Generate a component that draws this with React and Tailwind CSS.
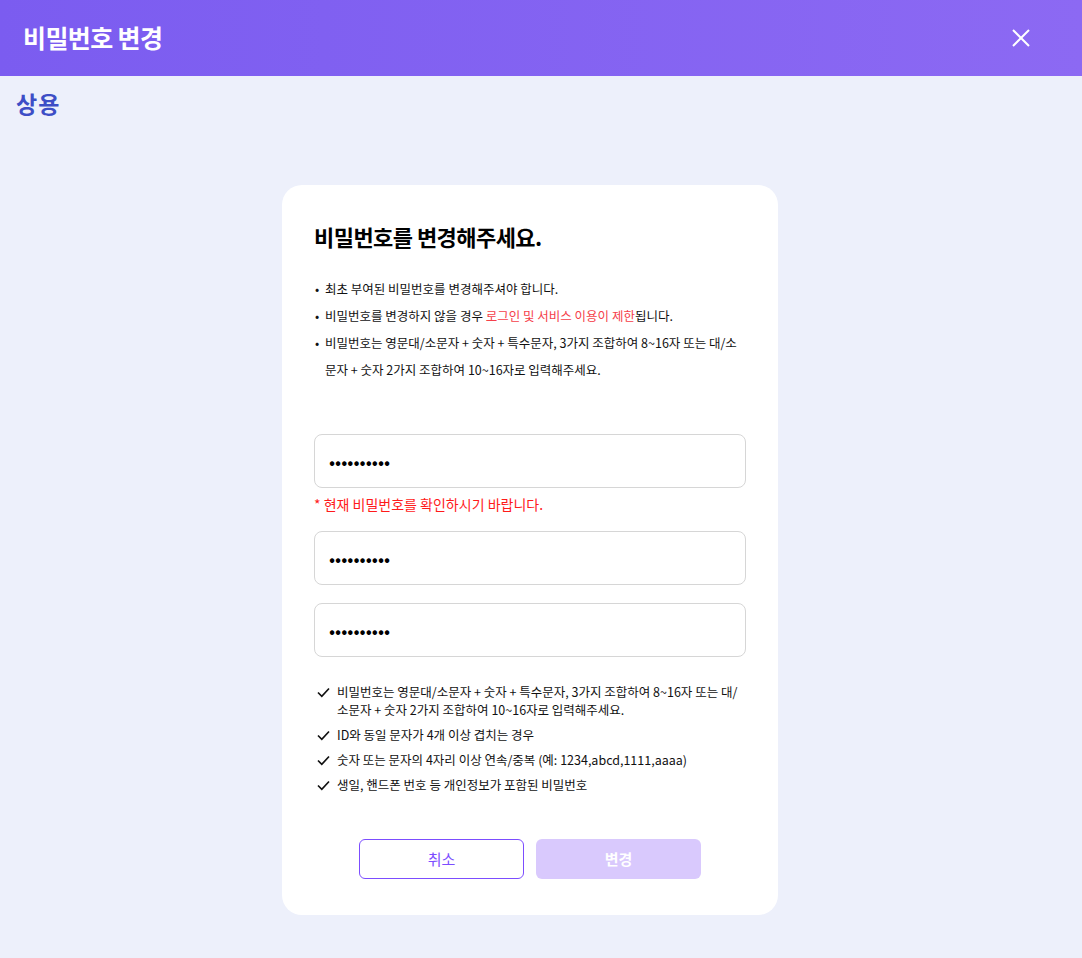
import { useState } from "react"

const font = { fontFamily: '"Noto Sans CJK KR", "Noto Sans", sans-serif' }

function Check() {
  return (
    <svg width="13" height="11" viewBox="0 0 13 11" className="mt-[4px] shrink-0">
      <path d="M1 5.5 L4.8 9.3 L12 1.5" fill="none" stroke="#111" strokeWidth="1.7" />
    </svg>
  )
}

export default function App() {
  const [pw, setPw] = useState({ current: "1234567890", next: "1234567890", confirm: "1234567890" })

  const update = (key, value) => setPw((prev) => ({ ...prev, [key]: value }))

  return (
    <main className="min-h-[958px] bg-[#edf0fb]" style={font}>
      <header className="flex h-[76px] items-center justify-between bg-gradient-to-r from-[#7b5cf0] to-[#8c69f3] pl-[23px] pr-[52px]">
        <h1 className="text-[25px] font-bold tracking-tight text-white">비밀번호 변경</h1>
        <button className="text-white">
          <svg width="18" height="18" viewBox="0 0 18 18">
            <path d="M1 1 L17 17 M17 1 L1 17" stroke="white" strokeWidth="2" />
          </svg>
        </button>
      </header>
      <div className="px-[16px] pt-[12px] text-[23px] font-bold leading-[30px] tracking-[1px] text-[#3d4ec6]">상용</div>

      <div className="ml-[282px] mt-[67px] w-[496px] rounded-[20px] bg-white px-[32px] pb-[36px] pt-[33px]">
        <h2 className="text-[22px] font-bold leading-[36px] tracking-tight text-black">비밀번호를 변경해주세요.</h2>

        <ul className="mt-[21px] text-[12.5px] leading-[27px] text-[#111]">
          <li className="flex">
            <span className="w-[11px] shrink-0 pl-[1px]">•</span>
            <span>최초 부여된 비밀번호를 변경해주셔야 합니다.</span>
          </li>
          <li className="flex">
            <span className="w-[11px] shrink-0 pl-[1px]">•</span>
            <span>
              비밀번호를 변경하지 않을 경우 <span className="text-[#f5404a]">로그인 및 서비스 이용이 제한</span>됩니다.
            </span>
          </li>
          <li className="flex">
            <span className="w-[11px] shrink-0 pl-[1px]">•</span>
            <span>
              비밀번호는 영문대/소문자 + 숫자 + 특수문자, 3가지 조합하여 8~16자 또는 대/소문자 + 숫자 2가지 조합하여 10~16자로 입력해주세요.
            </span>
          </li>
        </ul>

        <div className="mt-[51px]">
          <input
            type="password"
            value={pw.current}
            onChange={(e) => update("current", e.target.value)}
            className="h-[54px] w-full rounded-[8px] border border-[#d6d6d6] px-[14px] text-[18px] text-black outline-none"
          />
          <p className="mt-[6px] text-[14px] leading-[20px] text-[#ff1a1a]">* 현재 비밀번호를 확인하시기 바랍니다.</p>
          <input
            type="password"
            value={pw.next}
            onChange={(e) => update("next", e.target.value)}
            className="mt-[17px] h-[54px] w-full rounded-[8px] border border-[#d6d6d6] px-[14px] text-[18px] text-black outline-none"
          />
          <input
            type="password"
            value={pw.confirm}
            onChange={(e) => update("confirm", e.target.value)}
            className="mt-[18px] h-[54px] w-full rounded-[8px] border border-[#d6d6d6] px-[14px] text-[18px] text-black outline-none"
          />
        </div>

        <ul className="mt-[26px] grid gap-[7px] pl-[3px] text-[12.5px] leading-[18px] text-[#111]">
          <li className="flex gap-[7px]">
            <Check />
            <span>
              비밀번호는 영문대/소문자 + 숫자 + 특수문자, 3가지 조합하여 8~16자 또는 대/소문자 + 숫자 2가지 조합하여 10~16자로 입력해주세요.
            </span>
          </li>
          <li className="flex gap-[7px]">
            <Check />
            <span>ID와 동일 문자가 4개 이상 겹치는 경우</span>
          </li>
          <li className="flex gap-[7px]">
            <Check />
            <span>숫자 또는 문자의 4자리 이상 연속/중복 (예: 1234,abcd,1111,aaaa)</span>
          </li>
          <li className="flex gap-[7px]">
            <Check />
            <span>생일, 핸드폰 번호 등 개인정보가 포함된 비밀번호</span>
          </li>
        </ul>

        <div className="mt-[45px] flex justify-center gap-[12px]">
          <button className="h-[40px] w-[165px] rounded-[6px] border border-[#7c4dff] bg-white text-[15px] text-[#7c4dff]">
            취소
          </button>
          <button
            disabled
            className="h-[40px] w-[165px] rounded-[6px] bg-[#d9c9fd] text-[15px] font-bold text-white"
          >
            변경
          </button>
        </div>
      </div>
    </main>
  )
}
